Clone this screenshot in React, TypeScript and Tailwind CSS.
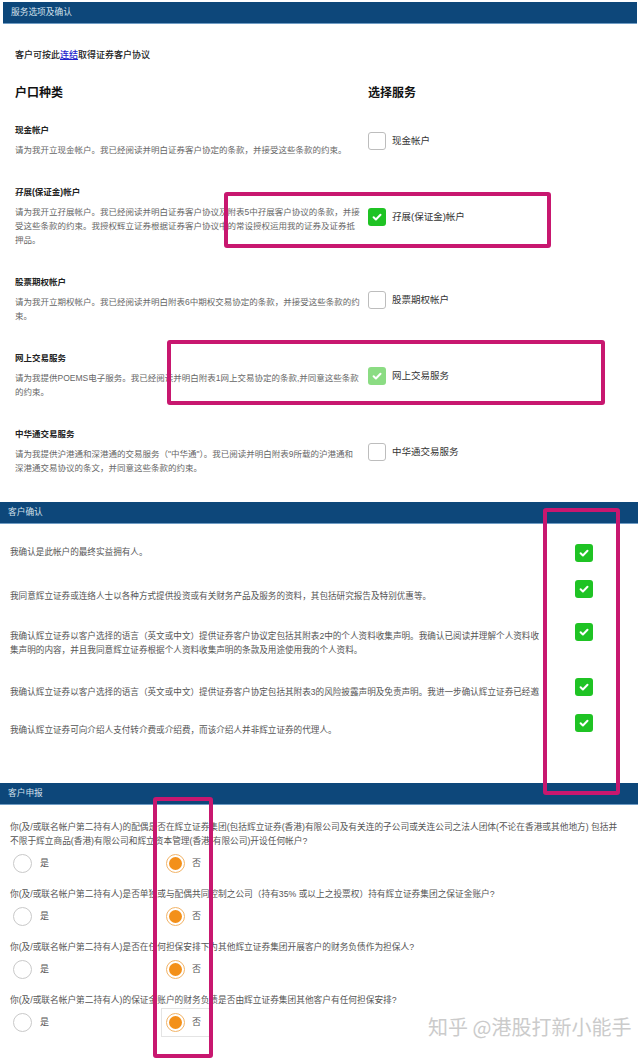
import { Fragment } from 'react';

type BoxState = 'on' | 'dim' | 'off';

const accounts: { title: string; lines: string[]; label: string; state: BoxState }[] = [
  {
    title: '现金帐户',
    lines: ['请为我开立现金帐户。我已经阅读并明白证券客户协定的条款，并接受这些条款的约束。'],
    label: '现金帐户',
    state: 'off',
  },
  {
    title: '孖展(保证金)帐户',
    lines: [
      '请为我开立孖展帐户。我已经阅读并明白证券客户协议及附表5中孖展客户协议的条款，并接',
      '受这些条款的约束。我授权辉立证券根据证券客户协议中的常设授权运用我的证券及证券抵',
      '押品。',
    ],
    label: '孖展(保证金)帐户',
    state: 'on',
  },
  {
    title: '股票期权帐户',
    lines: ['请为我开立期权帐户。我已经阅读并明白附表6中期权交易协定的条款，并接受这些条款的约', '束。'],
    label: '股票期权帐户',
    state: 'off',
  },
  {
    title: '网上交易服务',
    lines: ['请为我提供POEMS电子服务。我已经阅读并明白附表1网上交易协定的条款,并同意这些条款', '的约束。'],
    label: '网上交易服务',
    state: 'dim',
  },
  {
    title: '中华通交易服务',
    lines: [
      '请为我提供沪港通和深港通的交易服务（"中华通"）。我已阅读并明白附表9所载的沪港通和',
      '深港通交易协议的条文，并同意这些条款的约束。',
    ],
    label: '中华通交易服务',
    state: 'off',
  },
];

// rows of the confirm table do not line up evenly in the original
const confirms: { lines: string[]; row: string; text: string }[] = [
  { lines: ['我确认是此帐户的最终实益拥有人。'], row: 'mt-[20px]', text: 'pt-[1px]' },
  {
    lines: ['我同意辉立证券或连络人士以各种方式提供投资或有关财务产品及服务的资料，其包括研究报告及特别优惠等。'],
    row: 'mt-[18px]',
    text: 'pt-[9px]',
  },
  {
    lines: [
      '我确认辉立证券以客户选择的语言（英文或中文）提供证券客户协议定包括其附表2中的个人资料收集声明。我确认已阅读并理解个人资料收',
      '集声明的内容，并且我同意辉立证券根据个人资料收集声明的条款及用途使用我的个人资料。',
    ],
    row: 'mt-[20px]',
    text: 'pt-[6px]',
  },
  {
    lines: [
      '我确认辉立证券以客户选择的语言（英文或中文）提供证券客户协定包括其附表3的风险披露声明及免责声明。我进一步确认辉立证券已经邀',
    ],
    row: 'mt-[21px]',
    text: 'pt-[7px]',
  },
  {
    lines: ['我确认辉立证券可向介绍人支付转介费或介绍费，而该介绍人并非辉立证券的代理人。'],
    row: 'mt-[15px]',
    text: 'pt-[9px]',
  },
];

const questions: string[][] = [
  [
    '你(及/或联名帐户第二持有人)的配偶是否在辉立证券集团(包括辉立证券(香港)有限公司及有关连的子公司或关连公司之法人团体(不论在香港或其他地方) 包括并',
    '不限于辉立商品(香港)有限公司和辉立资本管理(香港)有限公司)开设任何帐户?',
  ],
  ['你(及/或联名帐户第二持有人)是否单独或与配偶共同控制之公司（持有35% 或以上之投票权）持有辉立证券集团之保证金账户?'],
  ['你(及/或联名帐户第二持有人)是否在任何担保安排下为其他辉立证券集团开展客户的财务负债作为担保人?'],
  ['你(及/或联名帐户第二持有人)的保证金账户的财务负债是否由辉立证券集团其他客户有任何担保安排?'],
];

function CheckBox({ state }: { state: BoxState }) {
  if (state === 'off') {
    return <div className="w-[18px] h-[18px] shrink-0 rounded-[3px] border border-[#bdbdbd] bg-white" />;
  }
  return (
    <div
      className={`w-[18px] h-[18px] shrink-0 rounded-[3px] flex items-center justify-center ${
        state === 'on' ? 'bg-[#1fc324]' : 'bg-[#8bdc83]'
      }`}
    >
      <svg width="12" height="12" viewBox="0 0 12 12">
        <path d="M2.6 6.3l2.3 2.2L9.5 3.7" fill="none" stroke="#fff" strokeWidth="2" strokeLinecap="round" strokeLinejoin="round" />
      </svg>
    </div>
  );
}

function Radio({ checked }: { checked?: boolean }) {
  if (!checked) {
    return <div className="w-[19px] h-[19px] rounded-full border border-[#c9c9c9] bg-white" />;
  }
  return (
    <div className="w-[19px] h-[19px] rounded-full border border-[#f2b468] bg-white p-[2px]">
      <div className="w-full h-full rounded-full bg-[#f39019]" />
    </div>
  );
}

function Bar({ title, className }: { title: string; className: string }) {
  return (
    <div className={`h-[22px] bg-[#0d477a] border-b border-[#6f9cc4] flex items-center text-[8.7px] text-[#d3e0ec] ${className}`}>
      {title}
    </div>
  );
}

function Mark({ className }: { className: string }) {
  return <div className={`absolute border-[4px] border-[#c8176f] rounded-[3px] ${className}`} />;
}

export default function App() {
  return (
    <div className="relative w-[640px] h-[1060px] overflow-hidden bg-white font-['Liberation_Sans','Noto_Sans_CJK_SC',sans-serif] text-[#444]">
      {/* 服务选项及确认 */}
      <Bar title="服务选项及确认" className="mx-[3px] mt-[2px] pl-[8px]" />

      <div className="mt-[25px] pl-[15px] text-[9px] leading-[12px] font-medium text-[#222]">
        客户可按此<span className="text-[#2222cc] underline">连结</span>取得证券客户协议
      </div>

      <div className="mt-[24px] pl-[15px] flex text-[12px] leading-[16px] font-bold text-[#111]">
        <div className="w-[353px]">户口种类</div>
        <div>选择服务</div>
      </div>

      <div className="mt-[24px] pl-[15px] flex flex-col gap-[30px]">
        {accounts.map((a) => (
          <div key={a.title} className="flex items-center">
            <div className="w-[353px]">
              <div className="text-[8.5px] leading-[10px] font-bold text-[#222]">{a.title}</div>
              <div className="mt-[8px] text-[8.5px] leading-[14px] text-[#666]">
                {a.lines.map((l, i) => (
                  <div key={i} className="whitespace-nowrap">
                    {l}
                  </div>
                ))}
              </div>
            </div>
            <div className="flex items-center gap-[6px]">
              <CheckBox state={a.state} />
              <span className="text-[9.5px] text-[#333]">{a.label}</span>
            </div>
          </div>
        ))}
      </div>

      {/* 客户确认 */}
      <Bar title="客户确认" className="mt-[27px] w-[638px] pl-[8px]" />

      <div className="pl-[10px]">
        {confirms.map((c, i) => (
          <div key={i} className={`flex items-start ${c.row}`}>
            <div className={`w-[530px] text-[8.6px] leading-[14px] text-[#555] ${c.text}`}>
              {c.lines.map((l, j) => (
                <div key={j} className="whitespace-nowrap">
                  {l}
                </div>
              ))}
            </div>
            <div className="ml-[35px]">
              <CheckBox state="on" />
            </div>
          </div>
        ))}
      </div>

      {/* 客户申报 */}
      <Bar title="客户申报" className="mt-[46px] w-[638px] pl-[8px]" />

      <div className="pl-[10px] pt-[15px]">
        {questions.map((q, i) => (
          <Fragment key={i}>
            <div className={`text-[8.7px] leading-[14px] text-[#555] ${i > 0 ? 'mt-[14px]' : ''}`}>
              {q.map((l, j) => (
                <div key={j} className="whitespace-nowrap">
                  {l}
                </div>
              ))}
            </div>
            <div className="mt-[6px] flex items-center h-[19px] text-[9px] text-[#555]">
              <div className="ml-[3px] w-[153px] flex items-center gap-[8px]">
                <Radio />
                <span>是</span>
              </div>
              <div
                className={`flex items-center gap-[7px] ${
                  i === 3 ? 'border border-[#e4e4e4] -m-[5px] p-[4px] pr-[8px]' : ''
                }`}
              >
                <Radio checked />
                <span>否</span>
              </div>
            </div>
          </Fragment>
        ))}
      </div>

      {/* annotations over the screenshot */}
      <Mark className="left-[224px] top-[192px] w-[327px] h-[56px]" />
      <Mark className="left-[167px] top-[340px] w-[438px] h-[65px]" />
      <Mark className="left-[543px] top-[508px] w-[77px] h-[287px]" />
      <Mark className="left-[153px] top-[797px] w-[60px] h-[261px]" />

      <div className="absolute left-[428px] top-[1013px] text-[20px] leading-[28px] text-[#cbcbcb] font-['Noto_Sans_CJK_SC',sans-serif]">
        知乎 @港股打新小能手
      </div>
    </div>
  );
}
